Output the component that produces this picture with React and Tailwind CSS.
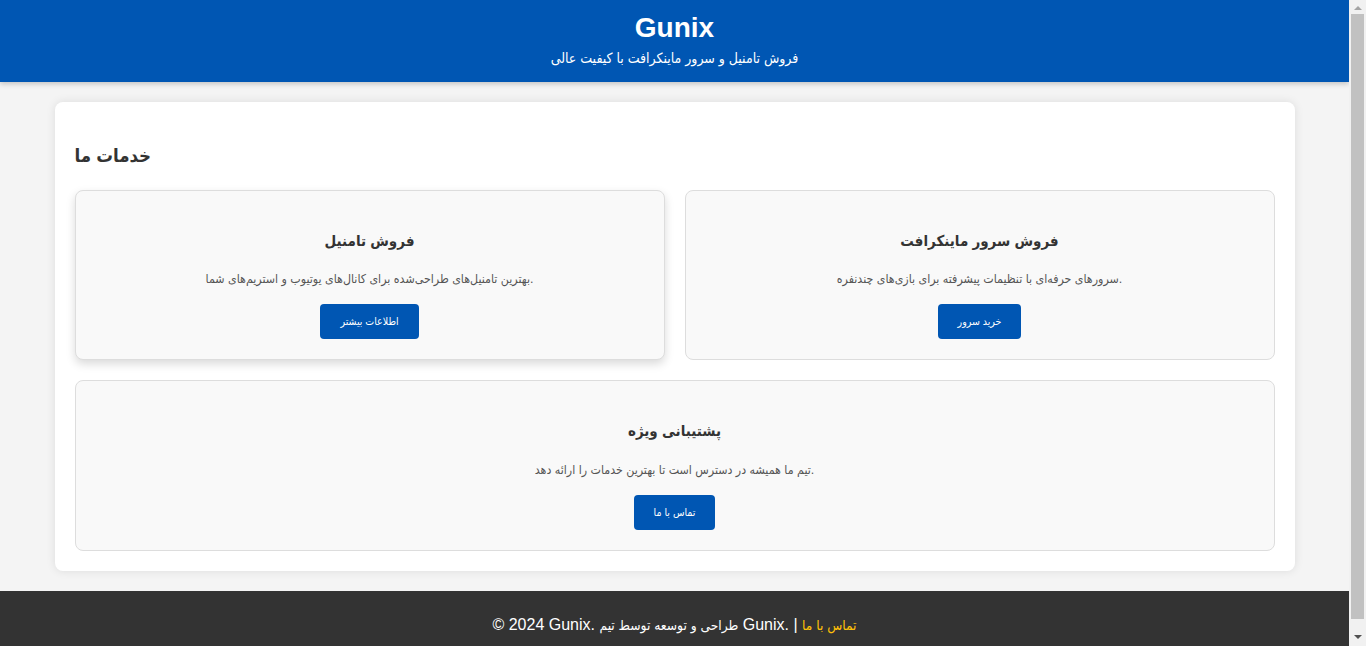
import React from "react";

const font = {
  fontFamily: '"Liberation Sans", "DejaVu Sans Condensed", "DejaVu Sans", sans-serif',
};

function Card({ title, text, button, className = "" }) {
  return (
    <div
      className={`flex flex-col items-center rounded-lg border border-[#ddd] bg-[#f9f9f9] p-5 text-center ${className}`}
    >
      <h3 className="mt-[18.72px] mb-[18.72px] text-[15px] font-bold leading-[22px] text-[#333]">
        {title}
      </h3>
      <p className="mb-4 text-[12.3px] leading-[18px] text-[#555]">{text}</p>
      <button className="rounded-[4px] bg-[#0056b3] px-5 py-[10px] text-[10.5px] leading-[15px] text-white">
        {button}
      </button>
    </div>
  );
}

function Scrollbar() {
  return (
    <div className="flex w-[17px] shrink-0 flex-col items-center bg-[#f1f1f1]">
      <div className="flex h-[14px] items-center justify-center">
        <svg width="8" height="5" viewBox="0 0 8 5">
          <path d="M0 5 L4 1 L8 5 Z" fill="#a3a3a3" />
        </svg>
      </div>
      <div className="h-[605px] w-[13px] bg-[#c1c1c1]" />
      <div className="flex-1" />
      <div className="flex h-[17px] items-center justify-center">
        <svg width="8" height="5" viewBox="0 0 8 5">
          <path d="M0 0 L8 0 L4 4 Z" fill="#505050" />
        </svg>
      </div>
    </div>
  );
}

export default function App() {
  return (
    <div className="flex h-screen overflow-hidden bg-[#f4f4f4] text-[#333]" style={font}>
      <div className="min-w-0 flex-1 overflow-hidden">
        <header className="bg-[#0056b3] pt-[12px] pb-[16px] text-center text-white shadow-[0_2px_5px_rgba(0,0,0,0.2)]">
          <h1 className="text-[28px] font-bold leading-[32px]">Gunix</h1>
          <p className="mt-[6px] text-[14px] leading-[16px]">
            فروش تامنیل و سرور ماینکرافت با کیفیت عالی
          </p>
        </header>

        <main className="mx-auto mt-5 max-w-[1240px] rounded-lg bg-white p-5 shadow-[0_0_10px_rgba(0,0,0,0.1)]">
          <h2 className="mt-5 mb-5 text-[18.5px] font-bold leading-[28px] text-[#333]">
            خدمات ما
          </h2>
          <div className="grid grid-cols-2 gap-5">
            <Card
              title="فروش تامنیل"
              text="بهترین تامنیل‌های طراحی‌شده برای کانال‌های یوتیوب و استریم‌های شما."
              button="اطلاعات بیشتر"
              className="shadow-[0_4px_10px_rgba(0,0,0,0.15)]"
            />
            <Card
              title="فروش سرور ماینکرافت"
              text="سرورهای حرفه‌ای با تنظیمات پیشرفته برای بازی‌های چندنفره."
              button="خرید سرور"
            />
            <Card
              title="پشتیبانی ویژه"
              text="تیم ما همیشه در دسترس است تا بهترین خدمات را ارائه دهد."
              button="تماس با ما"
              className="col-span-2"
            />
          </div>
        </main>

        <footer className="mt-5 bg-[#333] py-5 text-center text-[16px] leading-[28px] text-white">
          <p>
            © 2024 Gunix. <span className="text-[13.7px]">طراحی و توسعه توسط تیم</span> Gunix. |{" "}
            <a className="text-[13.7px] text-[#ffc107]">تماس با ما</a>
          </p>
        </footer>
      </div>
      <Scrollbar />
    </div>
  );
}
